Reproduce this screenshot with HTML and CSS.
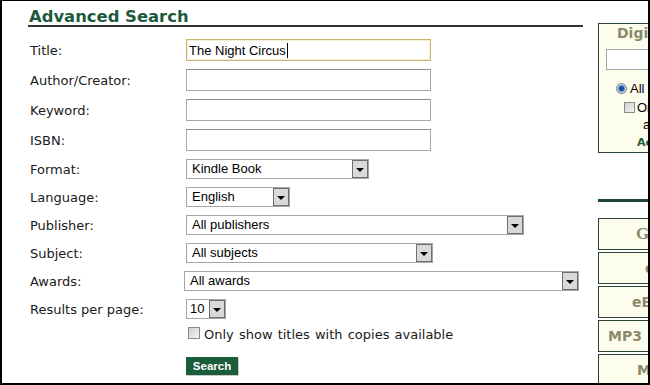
FILE: index.html
```html
<!DOCTYPE html>
<html lang="en">
<head>
<meta charset="utf-8">
<title>Advanced Search</title>
<link rel="stylesheet" href="styles.css">
</head>
<body>
<div class="frame">
  <main class="main">
    <h1 class="heading">Advanced Search</h1>
    <form class="form">
      <div class="row"><span class="label">Title:</span><div class="field focus"><span>The Night Circus</span><span class="caret"></span></div></div>
      <div class="row"><span class="label">Author/Creator:</span><div class="field"></div></div>
      <div class="row"><span class="label">Keyword:</span><div class="field"></div></div>
      <div class="row"><span class="label">ISBN:</span><div class="field"></div></div>
      <div class="row sel-row"><span class="label">Format:</span><div class="select w-format"><span class="sel-text">Kindle Book</span><span class="sel-btn"><span class="tri"></span></span></div></div>
      <div class="row sel-row"><span class="label">Language:</span><div class="select w-lang"><span class="sel-text">English</span><span class="sel-btn"><span class="tri"></span></span></div></div>
      <div class="row sel-row"><span class="label">Publisher:</span><div class="select w-pub"><span class="sel-text">All publishers</span><span class="sel-btn"><span class="tri"></span></span></div></div>
      <div class="row sel-row"><span class="label">Subject:</span><div class="select w-subj"><span class="sel-text">All subjects</span><span class="sel-btn"><span class="tri"></span></span></div></div>
      <div class="row sel-row"><span class="label">Awards:</span><div class="select w-awards"><span class="sel-text">All awards</span><span class="sel-btn"><span class="tri"></span></span></div></div>
      <div class="row sel-row"><span class="label">Results per page:</span><div class="select w-results"><span class="sel-text">10</span><span class="sel-btn"><span class="tri"></span></span></div></div>
      <div class="check-row"><span class="cb"></span><span class="check-label">Only show titles with copies available</span></div>
      <div class="btn-row"><button type="button" class="search">Search</button></div>
    </form>
  </main>
  <aside class="side">
    <div class="panel">
      <div class="panel-title">Digital Collection</div>
      <div class="panel-input"></div>
      <div class="radio-row"><span class="radio"></span><span>All titles</span></div>
      <div class="pcheck-row"><span class="pcb"></span><span>Only show titles</span></div>
      <div class="panel-sub">available</div>
      <div class="panel-link">Accessibility</div>
    </div>
    <div class="side-rule"></div>
    <div class="tabs">
      <div class="tab tab-g">Getting Started</div>
      <div class="tab tab-2">eAudiobooks</div>
      <div class="tab tab-eb">eBooks</div>
      <div class="tab tab-mp3">MP3<span class="tab-rest">Audiobooks</span></div>
      <div class="tab tab-m">Music</div>
    </div>
  </aside>
</div>
</body>
</html>
```
FILE: styles.css
```css
* { box-sizing: border-box; margin: 0; padding: 0; }
html, body { width: 650px; height: 385px; background: #fff; overflow: hidden; }

.frame {
  width: 650px;
  height: 385px;
  border: solid #000;
  border-width: 1px 2px 2px 2px;
  display: flex;
  overflow: hidden;
  background: #fff;
}

.main { flex: 0 0 555px; margin-left: 26px; }

.heading {
  margin-top: 7px;
  height: 19px;
  padding-left: 1px;
  font: bold 16.4px/17px "DejaVu Sans", Verdana, sans-serif;
  color: #1d5a3b;
  border-bottom: 2px solid #333;
}

.form { margin-top: 12px; }

.row { display: flex; align-items: center; height: 22px; margin-bottom: 8px; }
.row.sel-row { height: 20px; }

.label {
  width: 158px;
  flex: 0 0 158px;
  padding-left: 2px;
  font: 13px/15px "DejaVu Sans", Verdana, sans-serif;
  color: #1a1a1a;
}

.field {
  width: 245px;
  height: 22px;
  border: 1px solid #a8a8a8;
  border-top-color: #8c8c8c;
  display: flex;
  align-items: center;
  padding-left: 2px;
  font: 13px/15px "Liberation Sans", Arial, sans-serif;
  color: #000;
  background: #fff;
}
.field.focus { border-color: #c6b46f; box-shadow: inset 0 0 0 1px #f4eed4; }
.caret { width: 1px; height: 15px; background: #000; margin-left: 1px; }

.select {
  display: flex;
  height: 20px;
  border: 1px solid #a5a5a5;
  font: 13px/18px "Liberation Sans", Arial, sans-serif;
  color: #000;
  background: #fff;
}
.sel-text { flex: 1; padding-left: 5px; white-space: nowrap; overflow: hidden; }
.sel-btn {
  flex: 0 0 16px;
  height: 18px;
  border: 1px solid #6f6f6f;
  background: #d9d9d9;
  display: flex;
  align-items: center;
  justify-content: center;
}
.tri {
  width: 0; height: 0;
  border-left: 4px solid transparent;
  border-right: 4px solid transparent;
  border-top: 4px solid #000;
  margin-top: 1px;
}

.w-format { width: 183px; }
.w-lang { width: 104px; }
.w-pub { width: 338px; }
.w-subj { width: 247px; }
.w-awards { width: 395px; margin-left: -2px; }
.w-results { width: 40px; }
.w-results .sel-text { padding-left: 3px; }

.check-row { display: flex; align-items: flex-start; height: 16px; margin-top: 1px; padding-left: 160px; }
.cb {
  width: 12px; height: 12px;
  border: 1px solid #8a8a8a;
  background: linear-gradient(135deg, #cfcfcf, #f5f5f5);
  margin-right: 4px;
}
.check-label { font: 13px/16px "DejaVu Sans", Verdana, sans-serif; color: #1a1a1a; word-spacing: 1px; white-space: nowrap; }

.btn-row { margin-top: 13px; padding-left: 158px; }
.search {
  width: 52px; height: 18px;
  border: none;
  background: #1b5c3b;
  color: #fff;
  font: bold 11.5px/18px "Liberation Sans", Arial, sans-serif;
  text-align: center;
  box-shadow: 1px 1px 0 #c8c8c8;
}

/* sidebar */
.side { flex: 0 0 200px; margin-left: 15px; }
.panel {
  margin-top: 22px;
  height: 130px;
  border: 1px solid #2b4536;
  background: #fdfdee;
  white-space: nowrap;
}
.panel-title { padding-left: 18px; font: bold 14px/18px "DejaVu Sans", Verdana, sans-serif; color: #8b8a6c; }
.panel-input { margin: 7px 0 0 7px; width: 150px; height: 21px; border: 1px solid #a5a5a5; background: #fff; }
.radio-row { display: flex; align-items: center; height: 15px; margin-top: 11px; padding-left: 17px; font: 13px/15px "Liberation Sans", Arial, sans-serif; color: #000; }
.radio {
  width: 11px; height: 11px;
  border-radius: 50%;
  border: 1px solid #6d7f94;
  background: radial-gradient(circle, #1e4f9a 0 2px, #6f93c4 3px, #e6edf5 4.5px);
  margin-right: 3px;
}
.pcheck-row { display: flex; align-items: center; height: 15px; margin-top: 4px; padding-left: 25px; font: 13px/15px "Liberation Sans", Arial, sans-serif; color: #000; }
.pcb { width: 11px; height: 11px; border: 1px solid #8a8a8a; background: linear-gradient(135deg, #cfcfcf, #f5f5f5); margin-right: 2px; }
.panel-sub { margin-top: 2px; padding-left: 44px; font: 13px/15px "Liberation Sans", Arial, sans-serif; color: #000; }
.panel-link { margin-top: 5px; padding-left: 38px; font: bold 11px/12px "DejaVu Sans", Verdana, sans-serif; color: #1d5a3b; }

.side-rule { margin-top: 46px; height: 3px; background: #1f4535; }

.tabs { margin-top: 16px; }
.tab {
  height: 32px;
  margin-bottom: 2px;
  border: 1px solid #2b4536;
  background: #fdfdee;
  font: bold 14px/30px "DejaVu Sans", Verdana, sans-serif;
  color: #8b8a6c;
  white-space: nowrap;
}
.tab-g { padding-left: 37px; font: bold 17px/30px "Liberation Serif", "Times New Roman", serif; }
.tab-2 { padding-left: 46px; }
.tab-eb { padding-left: 33px; }
.tab-mp3 { padding-left: 9px; }
.tab-rest { margin-left: 24px; }
.tab-m { padding-left: 38px; }
```
